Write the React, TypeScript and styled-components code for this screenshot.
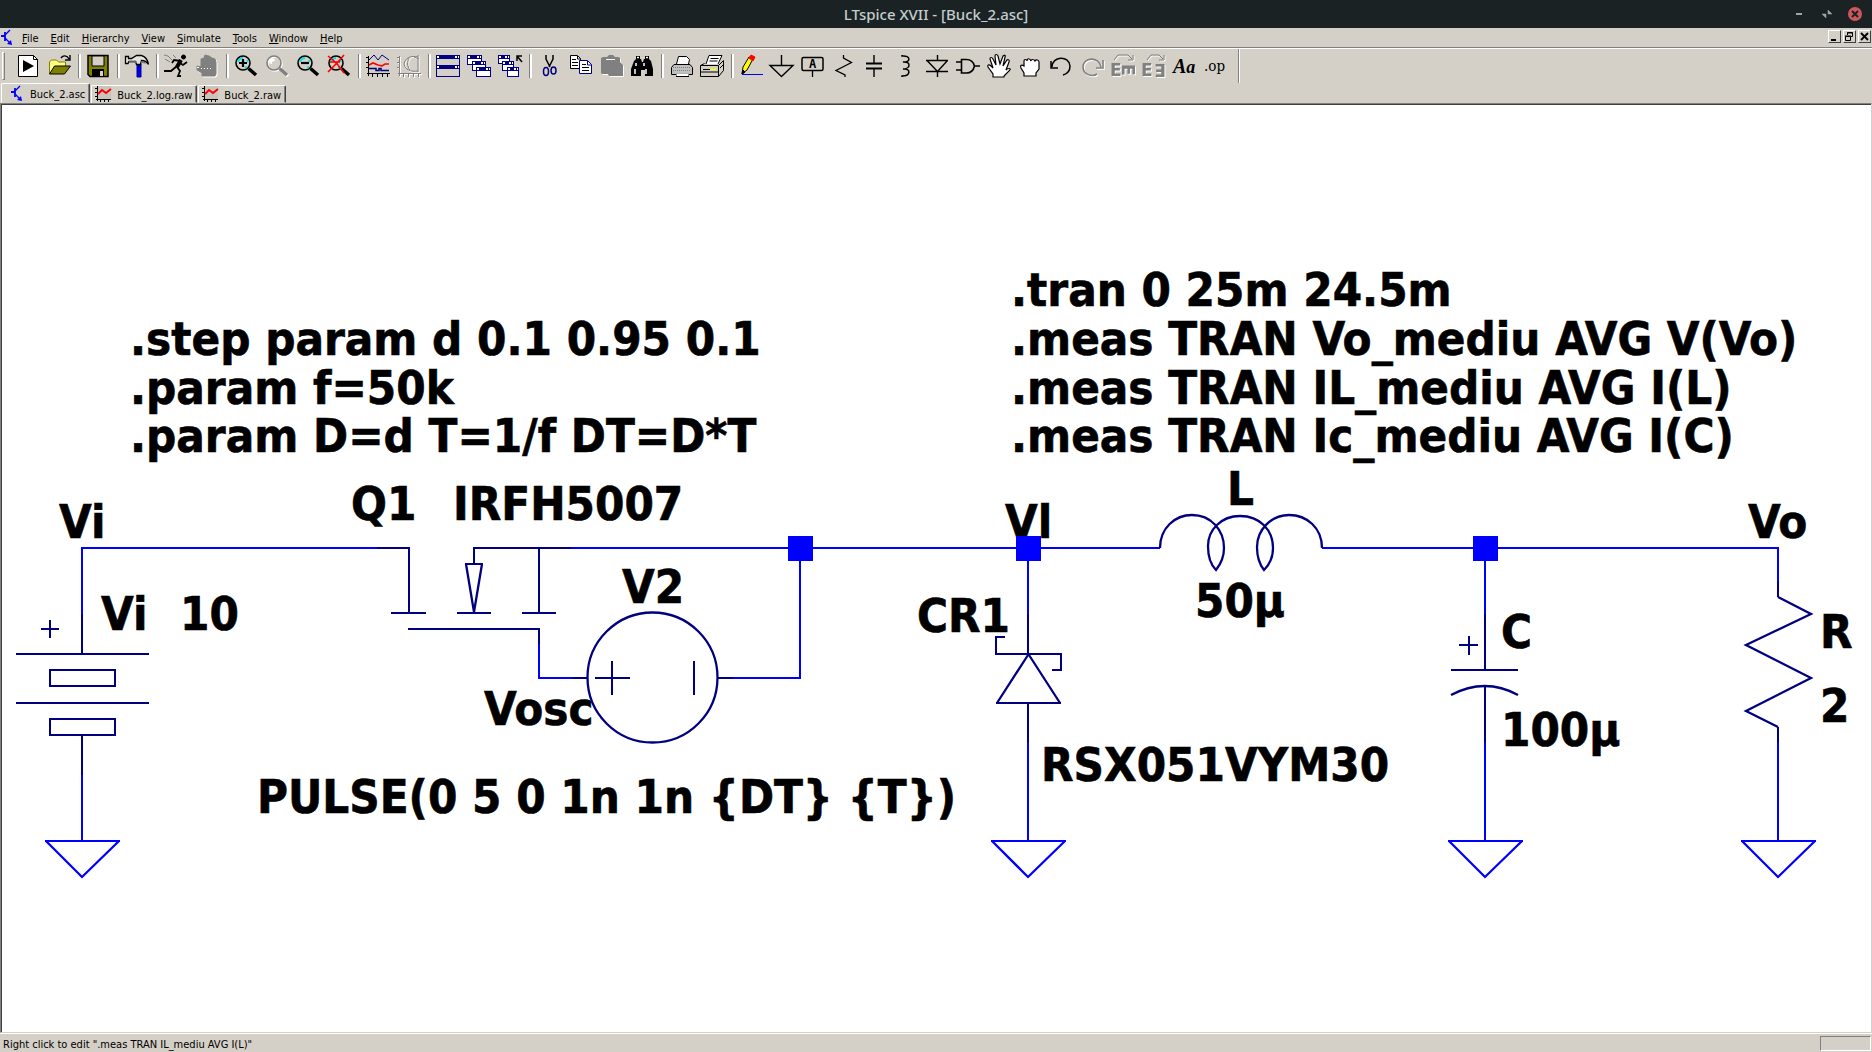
import React from "react";
import styled, { createGlobalStyle } from "styled-components";

const face = "#d4d0c8";
const wire = "#0000ff";
const part = "#000080";
const uiFont = `"DejaVu Sans Condensed", "DejaVu Sans", sans-serif`;

const GlobalStyle = createGlobalStyle`
  html, body, #root { height: 100%; }
  body { margin: 0; background: ${face}; overflow: hidden; }
  * { box-sizing: border-box; }
  button { font: inherit; color: inherit; border: 0; padding: 0; margin: 0; background: none; }
`;

const Window = styled.div`
  display: flex;
  flex-direction: column;
  height: 100%;
  font: 11px/14px ${uiFont};
  color: #000;
`;

const TitleBar = styled.header`
  display: grid;
  grid-template-columns: 1fr auto 1fr;
  align-items: center;
  height: 28px;
  background: #1b2224;
`;

const Title = styled.h1`
  grid-column: 2;
  margin: 0;
  color: #c3cdcf;
  font: 500 15px/20px "Noto Sans", sans-serif;
`;

const FrameButtons = styled.div`
  display: flex;
  justify-content: flex-end;
  gap: 14px;
  padding-right: 10px;
`;

const FrameButton = styled.button`
  display: flex;
  width: 14px;
  height: 14px;
`;

const MenuBar = styled.nav`
  display: flex;
  align-items: flex-start;
  height: 21px;
  padding-right: 1px;
  border-bottom: 1px solid #fff;
  box-shadow: inset 0 -1px 0 #808080;
`;

const MenuIcon = styled.span`
  display: flex;
  width: 16px;
  padding-top: 1px;
`;

const MenuItem = styled.button`
  padding: 4px 6px 0;
  line-height: 14px;
`;

const Spacer = styled.div`
  flex: 1;
`;

const ChildButtons = styled.div`
  display: flex;
  gap: 2px;
  padding-top: 2px;
`;

const ChildButton = styled.button`
  display: flex;
  width: 13px;
  height: 13px;
  border: 1px solid;
  border-color: #fff #404040 #404040 #fff;
`;

const ToolBar = styled.div`
  display: flex;
  height: 34px;
  padding-left: 2px;
  align-items: center;
`;

const Grip = styled.div`
  width: 3px;
  height: 28px;
  margin-right: 7px;
  border: 1px solid;
  border-color: #fff #808080 #808080 #fff;
`;

const Divider = styled.div`
  width: 8px;
  height: 24px;
  &::before {
    content: "";
    display: block;
    width: 2px;
    height: 100%;
    margin-left: 4px;
    border-left: 1px solid #808080;
    background: #fff;
  }
`;

const EndRule = styled.div`
  width: 2px;
  height: 34px;
  margin-left: 7px;
  border-left: 1px solid #808080;
  background: #fff;
`;

const ToolButton = styled.button`
  width: 31px;
  height: 30px;
  padding: 3px 3px 3px 4px;
`;

const ToolGlyph = styled.svg<{ $off?: boolean }>`
  display: block;
  width: 24px;
  height: 24px;
  fill: none;
  stroke: #000;
  overflow: visible;
  filter: ${(p) => (p.$off ? "drop-shadow(1px 1px 0 #fff)" : "none")};
`;

const TabStrip = styled.div`
  display: flex;
  align-items: flex-end;
  height: 20px;
  padding-left: 1px;
`;

const Tab = styled.button<{ $active?: boolean }>`
  display: flex;
  align-items: center;
  height: ${(p) => (p.$active ? 20 : 18)}px;
  padding: 0 4px 0 ${(p) => (p.$active ? 8 : 3)}px;
  gap: 4px;
  margin-right: 1px;
  border: 1px solid;
  border-color: #fff #404040 transparent #fff;
  border-radius: 2px 2px 0 0;
  box-shadow: inset -1px 0 0 #808080;
`;

const TabName = styled.span`
  padding-top: 3px;
`;

const Sheet = styled.main`
  flex: 1;
  min-height: 0;
  background: #fff;
  border: 1px solid;
  border-color: #808080 ${face} ${face} #808080;
  box-shadow: inset 1px 1px 0 #404040;
`;

const Schematic = styled.svg`
  display: block;
  width: 100%;
  height: 100%;
  fill: none;
  stroke-width: 2;
`;

const Label = styled.text`
  font: bold 47px ${uiFont};
  fill: #000;
  stroke: #000;
  stroke-width: 0.6px;
  white-space: pre;
`;

const StatusBar = styled.footer`
  display: flex;
  justify-content: space-between;
  height: 19px;
  padding: 2px 1px 1px 3px;
  border-top: 1px solid #fff;
`;

const StatusText = styled.span`
  padding-top: 2px;
`;

const StatusCell = styled.div`
  width: 51px;
  border: 1px solid;
  border-color: #808080 #fff #fff #808080;
`;

/* ---------- toolbar drawings, each on a 24 x 24 grid ---------- */

const g = "#808080";

const Lens = ({ off }: { off?: boolean }) => (
  <>
    <circle cx="9" cy="9" r="7" fill={off ? "none" : face} stroke={off ? g : "#000"} strokeWidth="1.6" />
    {!off && <path d="M4 8C5 5 7 4 9 4M13 13l-2 1M13 6l1 2" stroke="#00e0e8" strokeWidth="2" />}
    {off && <path d="M5 9c0-3 2-4 4-4" stroke="#fff" strokeWidth="1.5" />}
    <path d="M14.500 14.500l7.500 6.500" stroke={off ? g : "#000"} strokeWidth="3.500" />
  </>
);

const PlotAxes = ({ c = "#000" }: { c?: string }) => (
  <path d="M2.500 2v20M0 3.500h2M0 8.500h2M0 13.500h2M1 19.500h23M6.500 20v3M11.500 20v3M16.500 20v3M21.500 20v3" stroke={c} />
);

const Pane = ({ x, y, w, h }: { x: number; y: number; w: number; h: number }) => (
  <g shapeRendering="crispEdges">
    <rect x={x + 0.5} y={y + 0.5} width={w - 1} height={h - 1} fill={w < 20 ? "#fff" : face} stroke={part} />
    <path d={`M${x} ${y + 2}h${w}`} stroke={part} strokeWidth="4" />
    <path d={`M${x + 1} ${y + 2}h2M${x + w - 5} ${y + 2}h2M${x + w - 2} ${y + 2}h1`} stroke="#fff" strokeWidth="2" />
  </g>
);

const openHand = "M6 23v-3L1 13c-1-2 1-3 3-1l2 2L3 5c0-2 2-2 3 0l3 6L8 2c0-2 2-2 3 0l2 8 3-8c1-1 3-1 2 1l-2 9 4-6c1-1 3 0 2 2l-3 8c2-2 5-2 4 0l-6 6v1z";
const fist = "M6 22v-3L3 14c-1-2 0-4 3-2V7c0-2 3-2 3 0 0-3 3-3 4 0 0-2 3-2 4 0 1-2 4-1 4 1v7l-3 4v3z";

const glyphs: Record<string, React.ReactNode> = {
  run: (
    <>
      <path d="M2.500 1.500h15l4 4v17h-19z" fill="#fff" />
      <path d="M17.500 1.500v4h4" />
      <path d="M7 6v12l11-6z" fill="#000" stroke="none" />
    </>
  ),
  open: (
    <>
      <path d="M2.500 20V8l2-2h5l2 2h7v4" fill="#ffff80" stroke="#808000" />
      <path d="M2.500 20l5-8h16l-6 8z" fill="#808000" />
      <path d="M14 4c2-3 6-3 8 1M23 1v5h-5" strokeWidth="1.400" />
    </>
  ),
  save: (
    <>
      <path d="M2 1.500h20v21H4l-2-2z" fill="#808000" strokeWidth="1.500" />
      <path d="M6 2h12v10H6z" fill={face} stroke="#000" />
      <path d="M6 15h12v8H6z" fill="#000" stroke="none" />
      <path d="M14 17h3v5h-3z" fill={face} stroke="none" />
    </>
  ),
  hammer: (
    <>
      <path d="M12 10h4v13h-4z" fill="#0000e0" stroke="#0000a0" />
      <path d="M.500 2.500h3v2h3l5-3h5c4 1 6 4 7 9-2-3-4-4-7-4l-1 4h-4l-1-3H4l-1 2H.500z" fill="#e4e2dc" strokeWidth="1.300" />
      <path d="M4 8h8M16 8l5 1" stroke={g} strokeWidth="1.500" />
    </>
  ),
  runner: (
    <>
      <path d="M0 1l4 1 4 4M1 5l5 3M9 1l3 3" stroke={g} />
      <circle cx="19.500" cy="3" r="2" fill="#000" />
      <path d="M17 6l-4 7" strokeWidth="4" />
      <path d="M17 7l-7-1-2 3M16 9l3 2 4-3M13 12l-6 5H0M13 13l3 4-2 5h3" strokeWidth="1.800" />
    </>
  ),
  halt: (
    <>
      <path d="M7 22v-3l-5-3v-4l4 1V5l3-1 1-3 4 1 3 2 3 1 1 3v12l-1 2z" fill={g} stroke={g} />
      <path d="M2 13.500h2M6 14.500h1M9 14.500h1M12 14.500h1M15 14.500h1" stroke="#fff" />
    </>
  ),
  zoomIn: (
    <>
      <Lens />
      <path d="M9 5v8M5 9h8" strokeWidth="2.200" />
    </>
  ),
  zoomPan: <Lens off />,
  zoomOut: (
    <>
      <Lens />
      <path d="M5 9h8" strokeWidth="2.200" />
    </>
  ),
  zoomFit: (
    <>
      <Lens />
      <path d="M1 2l5 4 5 5 6 8M17 1l-6 7-5 5-5 5M3 8h10" stroke="#ff0000" strokeWidth="1.600" />
    </>
  ),
  plot: (
    <>
      <PlotAxes />
      <path d="M3 6l5-5 4 5 4-5 7 5" stroke={part} />
      <path d="M3 11l4-2 5 2 4 1 3-2h4" stroke="#ff0000" strokeWidth="1.600" />
      <path d="M3 14.500h7v2h3v-2h2v2h8" stroke={part} strokeWidth="1.500" />
    </>
  ),
  smith: (
    <>
      <PlotAxes c={g} />
      <path d="M21 1v17M21 3c-7-2-13 1-14 7 1 6 7 8 14 7M12 4c-2 4-2 8 1 12M17 3l5 2" stroke={g} />
    </>
  ),
  tile: (
    <>
      <Pane x={0} y={1} w={24} h={11} />
      <Pane x={0} y={11} w={24} h={12} />
    </>
  ),
  cascade: (
    <>
      <Pane x={0} y={1} w={15} h={10} />
      <Pane x={5} y={7} w={14} h={10} />
      <Pane x={9} y={13} w={15} h={10} />
    </>
  ),
  closeAll: (
    <>
      <Pane x={0} y={1} w={12} h={9} />
      <Pane x={4} y={7} w={12} h={10} />
      <Pane x={9} y={13} w={12} h={10} />
      <path d="M19 7V2h5M19 2l5 6" strokeWidth="1.500" />
    </>
  ),
  cut: (
    <>
      <path d="M9 1v4l4 8M16 1v4l-4 8" strokeWidth="1.500" />
      <ellipse cx="9" cy="17.500" rx="2.500" ry="4" stroke={part} strokeWidth="1.500" />
      <ellipse cx="16.500" cy="16.500" rx="2.500" ry="3.500" stroke={part} strokeWidth="1.500" />
    </>
  ),
  copy: (
    <>
      <path d="M2.500 1.500h7l3 3v10h-10z" fill="#fff" />
      <path d="M4 5.500h4M4 8.500h6M4 11.500h6M9.500 2v3h3" />
      <path d="M11.500 6.500h8l4 4v9h-12z" fill="#fff" stroke={part} />
      <path d="M14 10.500h4M14 13.500h7M14 16.500h7" />
      <path d="M19.500 7v4h4" stroke={part} />
    </>
  ),
  paste: (
    <>
      <path d="M2 4l2-1h4l2-2h4l2 2h3l2 1v4l3 3v11H10l-1-2H3l-1-1z" fill={g} stroke="none" />
      <path d="M7 5.500h9" stroke="#fff" />
    </>
  ),
  find: (
    <>
      <path d="M6 2h4v3h1l1 3h1l1-3h1V2h4v3l2 2 2 8v7h-8v-6h-4v6H1v-7l3-8 2-2z" fill="#000" stroke="none" />
      <path d="M6 9v3M5 15v5M14 9v3M16 15v5M7 3.500h2M16 3.500h2" stroke="#fff" strokeWidth="1.500" />
    </>
  ),
  printSetup: (
    <>
      <path d="M7.500 10l2-7.500h8l3 3-1 4.500" fill="#fff" />
      <path d="M5 10.500h16l2.500 3v7h-4v2h-12v-2h-5v-7z" fill="#c0c0c0" />
      <path d="M4 13.500h18M4 16.500h18M7.500 19.500h12v3h-12z" fill="#fff" stroke={g} strokeDasharray="1 1" />
      <path d="M7 22.500h13" />
    </>
  ),
  print: (
    <>
      <path d="M6 10l3-8.500h13l-4 8.500" fill="#fff" />
      <path d="M10.500 4.500h8M9.500 7h8" />
      <path d="M.500 11.500l4-2M.500 11.500h18v11H.500zM18.500 11.500l5-5v10l-5 6M.500 18h18M20 14l3-3" fill={face} />
      <path d="M3 15.500h7" />
      <path d="M10 15.500h6" stroke="#ffff00" strokeWidth="1.500" />
    </>
  ),
  pencil: (
    <>
      <path d="M3 20l1-7 6-10 4 2-6 11z" fill="#ffff00" />
      <path d="M10 4l2-3 4 2-2 4z" fill="#ff0000" stroke="#ff0000" />
      <path d="M3 20l1-4 2 2z" fill="#000" />
      <path d="M3 20.500h21" stroke={wire} />
    </>
  ),
  ground: <path d="M11.500 1v10M0 11.500h23l-11.500 11z" strokeWidth="1.400" />,
  netLabel: (
    <>
      <rect x="1" y="3.500" width="21" height="13" rx="1.500" strokeWidth="1.500" />
      <path d="M11.500 17v6" strokeWidth="1.300" />
      <text x="11.500" y="14" textAnchor="middle" fontFamily="DejaVu Sans Mono" fontWeight="bold" fontSize="12" fill="#000" stroke="none">A</text>
    </>
  ),
  resistor: <path d="M11.500 1v3l8 4.500-15.500 8 9 4.500v2" strokeWidth="1.300" />,
  capacitor: (
    <>
      <path d="M11 1v8M11 15v8" strokeWidth="1.400" />
      <path d="M3 9.500h16M3 14.500h16" strokeWidth="2" />
    </>
  ),
  inductor: <path d="M8 1v1c9-1 9 7 1 6 8-1 8 7 0 7 8-1 8 7-1 7v1" strokeWidth="1.500" />,
  diode: <path d="M12.500 1v5M1 6.500h22M2 6.500l10.500 11 10-11M1 17.500h22M12.500 18v5" strokeWidth="1.400" />,
  gate: <path d="M0 8h5M0 16h5M5.500 5.500h5c5 0 7 3 8 6.500-1 4-3 7-8 7h-5zM18 12h6" strokeWidth="1.600" />,
  move: <path d={openHand} fill="#fff" strokeWidth="1.200" />,
  drag: <path d={fist} fill="#fff" strokeWidth="1.200" />,
  undo: <path d="M3 13c0-11 17-12 18-1 0 5-3 8-7 9M2 7v7h7" strokeWidth="1.500" />,
  redo: <path d="M21 13C19 2 3 3 3 13c0 8 10 10 14 7M23 6v8h-7" stroke={g} strokeWidth="1.600" />,
  rotate: (
    <>
      <path d="M3 6l4-5h10l4 4M22 1v5h-5" stroke={g} />
      <g fill={g} stroke="none" fontFamily="DejaVu Sans" fontWeight="bold" fontSize="17">
        <text x="-1" y="22">E</text>
        <text transform="translate(11 10) rotate(90)" x="0" y="0">E</text>
      </g>
    </>
  ),
  mirror: (
    <>
      <path d="M5 6l4-5h8l4 4M22 1v5h-5" stroke={g} />
      <g fill={g} stroke="none" fontFamily="DejaVu Sans" fontWeight="bold" fontSize="17">
        <text x="-1" y="22">E</text>
        <text transform="rotate(180 18 16)" x="12" y="22">E</text>
      </g>
    </>
  ),
  text: (
    <text x="0" y="19" fontFamily="Liberation Serif" fontWeight="bold" fontStyle="italic" fontSize="20" fill="#000" stroke="none">
      A<tspan fontSize="18">a</tspan>
    </text>
  ),
  directive: (
    <text x="0" y="17" fontFamily="DejaVu Serif Condensed, DejaVu Serif" fontSize="15" fill="#000" stroke="none">.op</text>
  ),
};

const disabled = ["halt", "zoomPan", "smith", "paste", "redo", "rotate", "mirror"];

const toolGroups = [
  ["run", "open"],
  ["save"],
  ["hammer"],
  ["runner", "halt"],
  ["zoomIn", "zoomPan", "zoomOut", "zoomFit"],
  ["plot", "smith"],
  ["tile", "cascade", "closeAll"],
  ["cut", "copy", "paste", "find"],
  ["printSetup", "print"],
  ["pencil", "ground", "netLabel", "resistor", "capacitor", "inductor", "diode", "gate", "move", "drag", "undo", "redo", "rotate", "mirror", "text", "directive"],
];

const menus = ["File", "Edit", "Hierarchy", "View", "Simulate", "Tools", "Window", "Help"];

const Transistor = () => (
  <svg width="16" height="16" viewBox="0 0 16 16" fill="none" stroke="#0000ff" strokeWidth="1.400" aria-hidden="true">
    <path d="M1 7h4M5 3v9" strokeWidth="1.800" />
    <path d="M5 6l5-5M5 9l5 5" />
    <path d="M12 16l-5-1 4-4z" fill="#0000ff" stroke="none" />
  </svg>
);

const Waveform = () => (
  <svg width="18" height="16" viewBox="0 0 18 16" fill="none" aria-hidden="true">
    <rect x="2" width="14" height="13" fill="#c8c4bc" />
    <path d="M2.500 0v15M0 2.500h2M0 6.500h2M0 10.500h2M1 13.500h15M5.500 13v3M9.500 13v3M13.500 13v3" stroke="#000" />
    <path d="M3 8l4-4 4 3 5-4" stroke="#ff0000" strokeWidth="2" />
  </svg>
);

/* ---------- schematic data ---------- */

const labels: [number, number, string][] = [
  [59, 538, "Vi"],
  [101, 630, "Vi"],
  [180, 630, "10"],
  [351, 520, "Q1"],
  [453, 520, "IRFH5007"],
  [622, 603, "V2"],
  [484, 725, "Vosc"],
  [257, 813, "PULSE(0 5 0 1n 1n {DT} {T})"],
  [130, 355, ".step param d 0.1 0.95 0.1"],
  [130, 404, ".param f=50k"],
  [130, 452, ".param D=d T=1/f DT=D*T"],
  [1011, 306, ".tran 0 25m 24.5m"],
  [1011, 355, ".meas TRAN Vo_mediu AVG V(Vo)"],
  [1011, 404, ".meas TRAN IL_mediu AVG I(L)"],
  [1011, 452, ".meas TRAN Ic_mediu AVG I(C)"],
  [1005, 538, "Vl"],
  [917, 632, "CR1"],
  [1041, 781, "RSX051VYM30"],
  [1227, 505, "L"],
  [1195, 617, "50µ"],
  [1501, 648, "C"],
  [1501, 746, "100µ"],
  [1748, 538, "Vo"],
  [1820, 648, "R"],
  [1820, 722, "2"],
];

const wires = [
  "M82 614V548H377",
  "M82 775V841",
  "M571 548H1160",
  "M539 644V678H573",
  "M733 678H800V548",
  "M1028 548V614M1028 742V841",
  "M1322 548H1778V581M1778 742V841",
  "M1485 548V614M1485 742V841",
].join("");

const parts = [
  "M82 614V654M16 654H149M50 670H115V686H50zM16 703H149M50 719H115V735H50zM82 735V775M41 629H59M50 620V638",
  "M377 548H409V613M391 613H426M408 629H539V644M457 613H491M522 613H556M539 613V548M571 548H474V564M465 564H483",
  "M573 678H587M718 678H733M595 678H630M612 661V695M694 661V695",
  "M1028 614V654M1005 637H996V654H1061V670H1052M996 703H1061M1028 703V742",
  "M1485 614V670M1451 670H1518M1485 686V742M1459 645H1478M1469 636V655",
  "M1778 581V597M1778 727V742",
].join("");

const slanted = [
  "M466 564L474 612L482 564",
  "M1028 655L997 703M1029 655L1060 703",
  "M1160 548C1160 528 1175 515 1192 515C1211 515 1224 530 1224 548C1224 557 1220 565 1216 570C1211 565 1208 556 1208 546C1208 530 1221 516 1240 516C1260 516 1273 530 1273 548C1273 557 1269 565 1264 570C1260 565 1257 556 1257 547C1257 530 1271 515 1289 515C1307 515 1322 528 1322 548",
  "M1451 695Q1485 677 1518 695",
  "M1778 597L1811 614L1746 645L1811 678L1746 711L1778 727",
].join("");

const grounds = [82, 1028, 1485, 1778];
const junctions = [788, 1016, 1473];

export default function App() {
  return (
    <Window>
      <GlobalStyle />
      <TitleBar>
        <Title>LTspice XVII - [Buck_2.asc]</Title>
        <FrameButtons>
          <FrameButton aria-label="Minimize">
            <svg width="14" height="14"><path d="M4 7h6" stroke="#a0a6a8" strokeWidth="2" /></svg>
          </FrameButton>
          <FrameButton aria-label="Restore">
            <svg width="14" height="14"><path d="M8 3v4h4zM6 11V7H2z" fill="#a0a6a8" stroke="#a0a6a8" strokeWidth=".5" /></svg>
          </FrameButton>
          <FrameButton aria-label="Close">
            <svg width="14" height="14">
              <circle cx="7" cy="7" r="7" fill="#cc575d" />
              <path d="M4 4l6 6M10 4l-6 6" stroke="#1b2224" strokeWidth="2" />
            </svg>
          </FrameButton>
        </FrameButtons>
      </TitleBar>

      <MenuBar>
        <MenuIcon><Transistor /></MenuIcon>
        {menus.map((m) => (
          <MenuItem key={m}><u>{m[0]}</u>{m.slice(1)}</MenuItem>
        ))}
        <Spacer />
        <ChildButtons>
          <ChildButton aria-label="Minimize document">
            <svg width="11" height="11"><path d="M2 9h5" stroke="#000" strokeWidth="2" /></svg>
          </ChildButton>
          <ChildButton aria-label="Restore document">
            <svg width="11" height="11" fill="none" stroke="#000">
              <path d="M3.500 4V1.500h5v4H7M3 2h6M1.500 5.500h5v4h-5zM1 5h6" />
            </svg>
          </ChildButton>
          <ChildButton aria-label="Close document">
            <svg width="11" height="11"><path d="M2 2l7 7M9 2l-7 7" stroke="#000" strokeWidth="1.800" /></svg>
          </ChildButton>
        </ChildButtons>
      </MenuBar>

      <ToolBar role="toolbar">
        <Grip />
        {toolGroups.map((group, i) => (
          <React.Fragment key={i}>
            {i > 0 && <Divider />}
            {group.map((name) => (
              <ToolButton key={name} aria-label={name}>
                <ToolGlyph viewBox="0 0 24 24" $off={disabled.includes(name)}>{glyphs[name]}</ToolGlyph>
              </ToolButton>
            ))}
          </React.Fragment>
        ))}
        <EndRule />
      </ToolBar>

      <TabStrip role="tablist">
        <Tab role="tab" aria-selected="true" $active><Transistor /><TabName>Buck_2.asc</TabName></Tab>
        <Tab role="tab"><Waveform /><TabName>Buck_2.log.raw</TabName></Tab>
        <Tab role="tab"><Waveform /><TabName>Buck_2.raw</TabName></Tab>
      </TabStrip>

      <Sheet>
        <Schematic viewBox="1 104 1870 928" preserveAspectRatio="xMinYMin meet">
          {labels.map(([x, y, t]) => (
            <Label key={`${x}-${y}`} x={x} y={y}>{t}</Label>
          ))}
          <g shapeRendering="crispEdges">
            <path d={wires} stroke={wire} strokeLinejoin="miter" />
            <path d={parts} stroke={part} />
            {grounds.map((x) => (
              <path key={x} d={`M${x - 37} 841H${x + 38}`} stroke={wire} />
            ))}
            {junctions.map((x) => (
              <rect key={x} x={x} y="536" width="25" height="25" fill={wire} />
            ))}
          </g>
          <g strokeWidth="2.300">
            <path d={slanted} stroke={part} />
            <circle cx="652.500" cy="677.500" r="65" stroke={part} />
            {grounds.map((x) => (
              <path key={x} d={`M${x - 36} 841L${x} 877L${x + 37} 841`} stroke={wire} />
            ))}
          </g>
        </Schematic>
      </Sheet>

      <StatusBar>
        <StatusText>Right click to edit ".meas TRAN IL_mediu AVG I(L)"</StatusText>
        <StatusCell />
      </StatusBar>
    </Window>
  );
}
